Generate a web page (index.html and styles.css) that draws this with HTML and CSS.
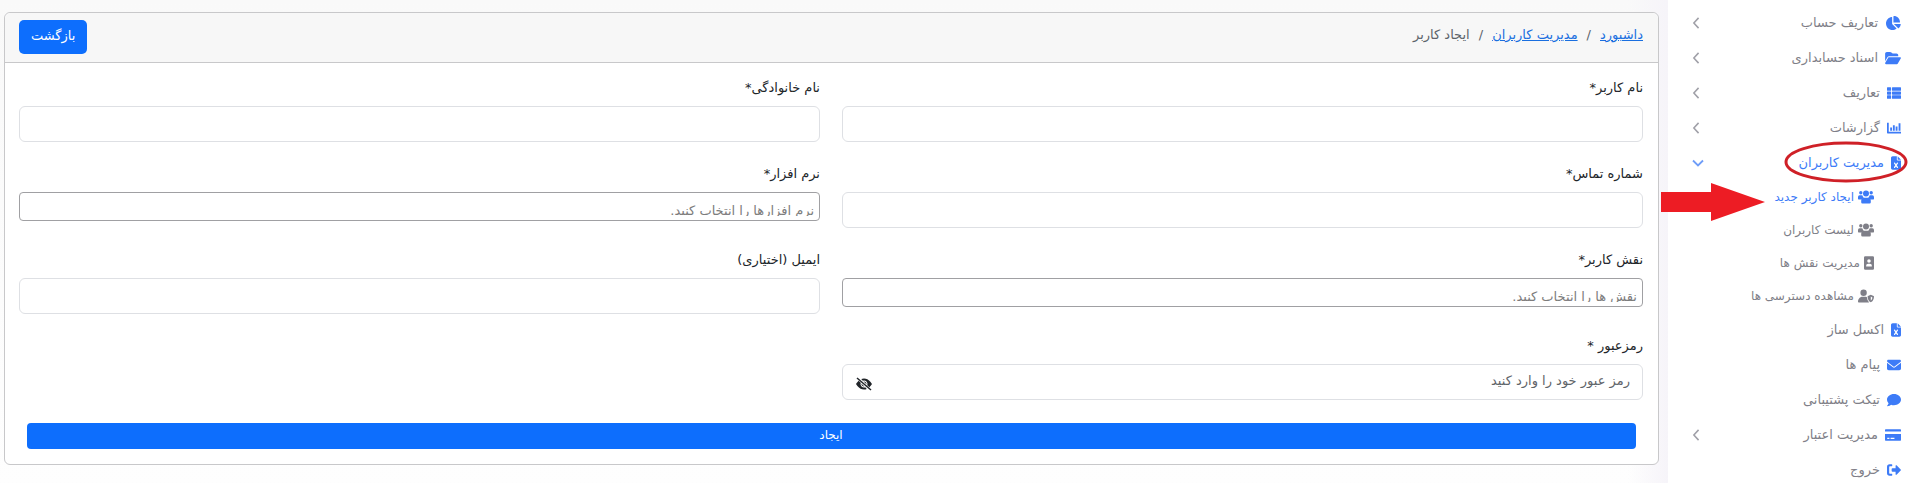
FILE: index.html
```html
<!DOCTYPE html>
<html lang="fa" dir="rtl">
<head>
<meta charset="UTF-8">
<meta name="viewport" content="width=device-width, initial-scale=1.0">
<title>ایجاد کاربر</title>
<link rel="stylesheet" href="styles.css">
</head>
<body>
    <!-- icon set -->
    <svg class="sprite" aria-hidden="true">
        <symbol id="i-pie" viewBox="0 0 576 512"><path d="M304 240V16.6c0-9 7-16.6 16-16.6C443.7 0 544 100.3 544 224c0 9-7.6 16-16.6 16H304zM32 272C32 150.7 122.1 50.3 239 34.3c9.2-1.3 17 6.1 17 15.4V288L412.5 444.5c6.7 6.7 6.2 17.7-1.5 23.1C371.8 495.6 323.8 512 272 512C139.5 512 32 404.6 32 272zm526.4 16c9.3 0 16.6 7.8 15.4 17c-7.7 55.9-34.6 105.6-73.9 142.3c-6 5.6-15.4 5.2-21.2-.7L320 288H558.4z"/></symbol>
        <symbol id="i-folder" viewBox="0 0 576 512"><path d="M88.7 223.8L0 375.8V96C0 60.7 28.7 32 64 32H181.5c17 0 33.3 6.7 45.3 18.7l26.5 26.5c12 12 28.3 18.7 45.3 18.7H416c35.3 0 64 28.7 64 64v32H144c-22.8 0-43.8 12.1-55.3 31.8zm27.6 16.1C122.1 230 132.6 224 144 224H544c11.5 0 22 6.1 27.7 16.1s5.7 22.2-.1 32.1l-112 192C453.9 474 443.4 480 432 480H32c-11.5 0-22-6.1-27.7-16.1s-5.7-22.2 .1-32.1l112-192z"/></symbol>
        <symbol id="i-list" viewBox="0 0 512 448"><path d="M20 16h110q20 0 20 20v90q0 20-20 20H20q-20 0-20-20V36q0-20 20-20zM202 16h290q20 0 20 20v90q0 20-20 20H202q-20 0-20-20V36q0-20 20-20zM20 166h110q20 0 20 20v78q0 20-20 20H20q-20 0-20-20v-78q0-20 20-20zM202 166h290q20 0 20 20v78q0 20-20 20H202q-20 0-20-20v-78q0-20 20-20zM20 306h110q20 0 20 20v90q0 20-20 20H20q-20 0-20-20v-90q0-20 20-20zM202 306h290q20 0 20 20v90q0 20-20 20H202q-20 0-20-20v-90q0-20 20-20z"/></symbol>
        <symbol id="i-chart" viewBox="0 0 512 448"><path d="M0 32h64v328h448v64H24q-24 0-24-24zM116 210h68v110h-68zM216 120h68v200h-68zM316 170h68v150h-68zM424 50h68v270h-68z"/></symbol>
        <symbol id="i-excel" viewBox="0 0 384 512"><path d="M64 0C28.7 0 0 28.7 0 64V448c0 35.3 28.7 64 64 64H320c35.3 0 64-28.7 64-64V160H256c-17.7 0-32-14.3-32-32V0H64zM256 0V128H384L256 0zM155.7 250.2L192 302.1l36.3-51.9c7.600-10.900 22.600-13.500 33.400-5.900s13.500 22.600 5.900 33.400L221.300 344l46.400 66.200c7.600 10.900 5 25.800-5.900 33.400s-25.800 5-33.400-5.900L192 385.800l-36.300 51.900c-7.600 10.900-22.600 13.500-33.400 5.900s-13.500-22.600-5.900-33.400L162.700 344l-46.400-66.200c-7.600-10.900-5-25.800 5.900-33.400s25.800-5 33.400 5.900z"/></symbol>
        <symbol id="i-users" viewBox="0 0 640 512"><path d="M112 20a68 68 0 1 1 0 136 68 68 0 1 1 0-136zM528 20a68 68 0 1 1 0 136 68 68 0 1 1 0-136zM320 0a120 120 0 1 1 0 240 120 120 0 1 1 0-240zM64 190h82q20 0 34 10 10 60 52 90-76 16-98 62H24q-24 0-24-24v-74q0-64 64-64zM576 190h-82q-20 0-34 10-10 60-52 90 76 16 98 62h110q24 0 24-24v-74q0-64-64-64zM250 284h140q116 0 122 120v60q0 48-48 48H176q-48 0-48-48v-60q6-120 122-120z"/></symbol>
        <symbol id="i-contact" viewBox="0 0 384 512"><path fill-rule="evenodd" d="M48 0h288q48 0 48 48v416q0 48-48 48H48q-48 0-48-48V48Q0 0 48 0zM192 110a68 68 0 1 0 0 136 68 68 0 1 0 0-136zM160 280q-80 0-80 90 0 22 20 22h184q20 0 20-22 0-90-80-90z"/></symbol>
        <symbol id="i-shield" viewBox="0 0 640 512"><path fill-rule="evenodd" d="M96 128a128 128 0 1 1 256 0 128 128 0 1 1-256 0zM178 290h92c40 0 60 6 90 20 2 80 32 144 80 192q-8 10-18 10H30q-30 0-30-30c0-98 80-192 178-192zM512 206l112 46q16 6 16 22c0 100-40 182-112 226q-16 8-32 0c-72-44-112-126-112-226q0-16 16-22zM512 274v158c36-26 60-70 64-120z"/></symbol>
        <symbol id="i-mail" viewBox="0 0 512 512"><path d="M48 64C21.500 64 0 85.500 0 112c0 15.100 7.100 29.300 19.200 38.400L236.800 313.600c11.400 8.500 27 8.500 38.400 0L492.800 150.400c12.100-9.100 19.200-23.300 19.200-38.400c0-26.500-21.500-48-48-48H48zM0 176V384c0 35.300 28.700 64 64 64H448c35.300 0 64-28.700 64-64V176L294.400 339.200c-22.800 17.100-54 17.100-76.800 0L0 176z"/></symbol>
        <symbol id="i-comment" viewBox="0 0 512 512"><path d="M256 32C114.600 32 0 125.100 0 240c0 49.600 21.400 95 57 130.700C44.500 421.100 2.700 466 2.200 466.500c-2.200 2.300-2.800 5.700-1.500 8.700S4.800 480 8 480c66.300 0 116-31.800 140.600-51.400 32.700 12.300 69 19.400 107.400 19.400 141.400 0 256-93.100 256-208S397.400 32 256 32z"/></symbol>
        <symbol id="i-card" viewBox="0 0 576 448"><path fill-rule="evenodd" d="M24 20h528q24 0 24 24v56H0V44q0-24 24-24zM0 190h576v214q0 24-24 24H24q-24 0-24-24zM80 320v48h80v-48zM200 320v48h140v-48z"/></symbol>
        <symbol id="i-exit" viewBox="0 0 512 448"><path d="M500 206L350 54q-36-22-36 16v90H200q-30 0-30 30v68q0 30 30 30h114v90q0 38 36 16l150-152q18-18 0-36zM176 16q16 0 16 16v40q0 16-16 16H104q-24 0-24 24v224q0 24 24 24h72q16 0 16 16v40q0 16-16 16H96q-96 0-96-96V112q0-96 96-96z"/></symbol>
        <symbol id="i-eye-off" viewBox="0 0 16 16"><path d="m10.790 12.912-1.614-1.615a3.500 3.500 0 0 1-4.474-4.474l-2.060-2.060C.938 6.278 0 8 0 8s3 5.500 8 5.500a7 7 0 0 0 2.790-.588M5.210 3.088A7 7 0 0 1 8 2.500c5 0 8 5.500 8 5.500s-.939 1.721-2.641 3.238l-2.062-2.062a3.500 3.500 0 0 0-4.474-4.474z"/><path d="M5.525 7.646a2.500 2.500 0 0 0 2.829 2.829zm4.950.708-2.829-2.830a2.500 2.500 0 0 1 2.829 2.829z"/><path d="M1 2l14 12" stroke="currentColor" stroke-width="1.500"/></symbol>
        <symbol id="i-left" viewBox="0 0 8 14"><path d="M7 1L1.500 7 7 13" fill="none" stroke="currentColor" stroke-width="1.800"/></symbol>
        <symbol id="i-down" viewBox="0 0 12 8"><path d="M1 1.500l5 5 5-5" fill="none" stroke="currentColor" stroke-width="1.800"/></symbol>
    </svg>

    <div class="wrapper">
        <nav class="sidebar">
            <a href="#" class="nav-item"><svg class="icon w-16"><use href="#i-pie"/></svg>تعاریف حساب<svg class="caret"><use href="#i-left"/></svg></a>
            <a href="#" class="nav-item"><svg class="icon w-16"><use href="#i-folder"/></svg>اسناد حسابداری<svg class="caret"><use href="#i-left"/></svg></a>
            <a href="#" class="nav-item"><svg class="icon w-14"><use href="#i-list"/></svg>تعاریف<svg class="caret"><use href="#i-left"/></svg></a>
            <a href="#" class="nav-item"><svg class="icon w-14"><use href="#i-chart"/></svg>گزارشات<svg class="caret"><use href="#i-left"/></svg></a>
            <a href="#" class="nav-item active"><svg class="icon w-10"><use href="#i-excel"/></svg>مدیریت کاربران<svg class="caret open"><use href="#i-down"/></svg>
                <svg class="mark-circle" viewBox="0 0 124 42"><ellipse cx="62" cy="21" rx="60" ry="19"/></svg>
            </a>
            <div class="submenu">
                <a href="#" class="sub-item active"><svg class="icon w-16"><use href="#i-users"/></svg>ایجاد کاربر جدید
                    <svg class="mark-arrow" viewBox="0 0 104 38"><path d="M0 9h50V0l54 19-54 19v-9H0z"/></svg>
                </a>
                <a href="#" class="sub-item"><svg class="icon w-16"><use href="#i-users"/></svg>لیست کاربران</a>
                <a href="#" class="sub-item"><svg class="icon w-10"><use href="#i-contact"/></svg>مدیریت نقش ها</a>
                <a href="#" class="sub-item"><svg class="icon w-16"><use href="#i-shield"/></svg>مشاهده دسترسی ها</a>
            </div>
            <a href="#" class="nav-item"><svg class="icon w-10"><use href="#i-excel"/></svg>اکسل ساز</a>
            <a href="#" class="nav-item"><svg class="icon w-14"><use href="#i-mail"/></svg>پیام ها</a>
            <a href="#" class="nav-item"><svg class="icon w-14"><use href="#i-comment"/></svg>تیکت پشتیبانی</a>
            <a href="#" class="nav-item"><svg class="icon w-16"><use href="#i-card"/></svg>مدیریت اعتبار<svg class="caret"><use href="#i-left"/></svg></a>
            <a href="#" class="nav-item"><svg class="icon w-14"><use href="#i-exit"/></svg>خروج</a>
        </nav>

        <main class="content">
            <div class="card">
                <div class="card-header">
                    <ol class="breadcrumb">
                        <li><a href="#">داشبورد</a></li>
                        <li><a href="#">مدیریت کاربران</a></li>
                        <li>ایجاد کاربر</li>
                    </ol>
                    <button type="button" class="btn btn-back">بازگشت</button>
                </div>
                <form class="card-body">
                    <div class="form-grid">
                        <div class="field">
                            <label for="name">نام کاربر*</label>
                            <input type="text" id="name" class="form-control">
                        </div>
                        <div class="field">
                            <label for="family">نام خانوادگی*</label>
                            <input type="text" id="family" class="form-control">
                        </div>
                        <div class="field">
                            <label for="phone">شماره تماس*</label>
                            <input type="text" id="phone" class="form-control">
                        </div>
                        <div class="field">
                            <label for="software">نرم افزار*</label>
                            <div class="multi-select"><textarea id="software" rows="1" placeholder="نرم افزارها را انتخاب کنید."></textarea></div>
                        </div>
                        <div class="field">
                            <label for="role">نقش کاربر*</label>
                            <div class="multi-select"><textarea id="role" rows="1" placeholder="نقش ها را انتخاب کنید."></textarea></div>
                        </div>
                        <div class="field">
                            <label for="email">ایمیل (اختیاری)</label>
                            <input type="email" id="email" class="form-control">
                        </div>
                        <div class="field">
                            <label for="password">رمزعبور *</label>
                            <div class="password-box">
                                <input type="password" id="password" class="form-control" placeholder="رمز عبور خود را وارد کنید">
                                <button type="button" class="toggle-eye" aria-label="نمایش رمز"><svg><use href="#i-eye-off"/></svg></button>
                            </div>
                        </div>
                    </div>
                    <button type="submit" class="btn btn-submit">ایجاد</button>
                </form>
            </div>
        </main>
    </div>
</body>
</html>
```
FILE: styles.css
```css
* {
    box-sizing: border-box;
}
body {
    margin: 0;
    font-family: 'DejaVu Sans', sans-serif;
    font-size: 13px;
    color: #212529;
    background: #fff;
}
button, input, textarea {
    font-family: inherit;
}
svg {
    fill: currentColor;
}
.sprite {
    display: none;
}
.wrapper {
    display: flex;
    min-height: 100vh;
}

/* Sidebar */
.sidebar {
    flex: 0 0 245px;
    padding: 5px 12px 0 24px;
    background: #fff;
}
.nav-item, .sub-item {
    position: relative;
    display: flex;
    align-items: center;
    gap: 7px;
    height: 35px;
    color: #7f7f88;
    text-decoration: none;
    white-space: nowrap;
}
.nav-item .icon {
    color: #3d7bf7;
}
.nav-item.active, .sub-item.active {
    color: #3d7bf7;
}
.icon {
    height: 14px;
    flex: none;
}
.w-16 { width: 16px; }
.w-14 { width: 14px; }
.w-10 { width: 10px; }
.caret {
    width: 8px;
    height: 12px;
    margin-right: auto;
    color: #a0a0a8;
}
.caret.open {
    width: 12px;
    height: 8px;
    color: #6f9df8;
}
.submenu {
    padding-right: 27px;
}
.sub-item {
    gap: 4px;
    height: 33px;
    font-size: 12px;
}

/* Red annotations over the menu */
.mark-circle {
    position: absolute;
    top: -4px;
    right: -7px;
    width: 124px;
    height: 42px;
    fill: none;
    stroke: #cf2027;
    stroke-width: 3;
}
.mark-arrow {
    position: absolute;
    top: 3px;
    right: 109px;
    width: 104px;
    height: 38px;
    fill: #ed1c24;
}

/* Content */
.content {
    flex: 1;
    min-width: 0;
    padding: 12px 9px 18px 4px;
    background: linear-gradient(to left, #f6f4f9, rgba(255, 255, 255, 0) 40px), linear-gradient(#f9f9f9, #fefefe);
}
.card {
    background: #fff;
    border: 1px solid #c8c8ca;
    border-radius: 6px;
}
.card-header {
    display: flex;
    justify-content: space-between;
    align-items: flex-start;
    padding: 7px 15px 8px 14px;
    background: #f7f7f7;
    border-bottom: 1px solid #c8c8ca;
    border-radius: 6px 6px 0 0;
}
.breadcrumb {
    display: flex;
    margin: 0;
    padding: 4px 0 0;
    list-style: none;
    line-height: 22px;
    color: #5c636a;
}
.breadcrumb li + li::before {
    content: "/";
    padding: 0 9px;
}
.breadcrumb a {
    color: #1a6fe0;
}
.btn {
    border: 0;
    border-radius: 5px;
    background: #0d6efd;
    color: #fff;
    cursor: pointer;
}
.btn-back {
    height: 34px;
    padding: 0 12px 4px;
    font-size: 13px;
}
.card-body {
    padding: 13px 15px 15px 14px;
}
.form-grid {
    display: grid;
    grid-template-columns: 1fr 1fr;
    gap: 20px 22px;
}
.field label {
    display: block;
    margin-bottom: 6px;
    line-height: 24px;
}
.form-control {
    display: block;
    width: 100%;
    height: 36px;
    padding: 4px 12px 8px;
    border: 1px solid #dee0e4;
    border-radius: 6px;
    background: #fff;
    font-size: 13px;
}
.form-control::placeholder {
    color: #5f6469;
    opacity: 1;
}
.multi-select {
    height: 29px;
    padding: 8px 5px 0;
    border: 1px solid #a0a0a3;
    border-radius: 4px;
    background: #fff;
}
.multi-select textarea {
    display: block;
    width: 100%;
    height: 15px;
    padding: 0;
    border: 0;
    outline: 0;
    resize: none;
    overflow: hidden;
    background: transparent;
    font-size: 13px;
    line-height: 20px;
}
.multi-select textarea::placeholder {
    color: #7c7c7c;
    opacity: 1;
}
.password-box {
    position: relative;
}
.password-box .form-control {
    padding-left: 40px;
}
.toggle-eye {
    position: absolute;
    left: 14px;
    top: 12px;
    width: 16px;
    height: 16px;
    padding: 0;
    border: 0;
    background: none;
    color: #212529;
}
.toggle-eye svg {
    display: block;
    width: 16px;
    height: 16px;
}
.btn-submit {
    display: block;
    width: calc(100% - 15px);
    height: 26px;
    margin: 23px auto 0;
    padding: 0 0 3px;
    border-radius: 4px;
    font-size: 12px;
}
```
